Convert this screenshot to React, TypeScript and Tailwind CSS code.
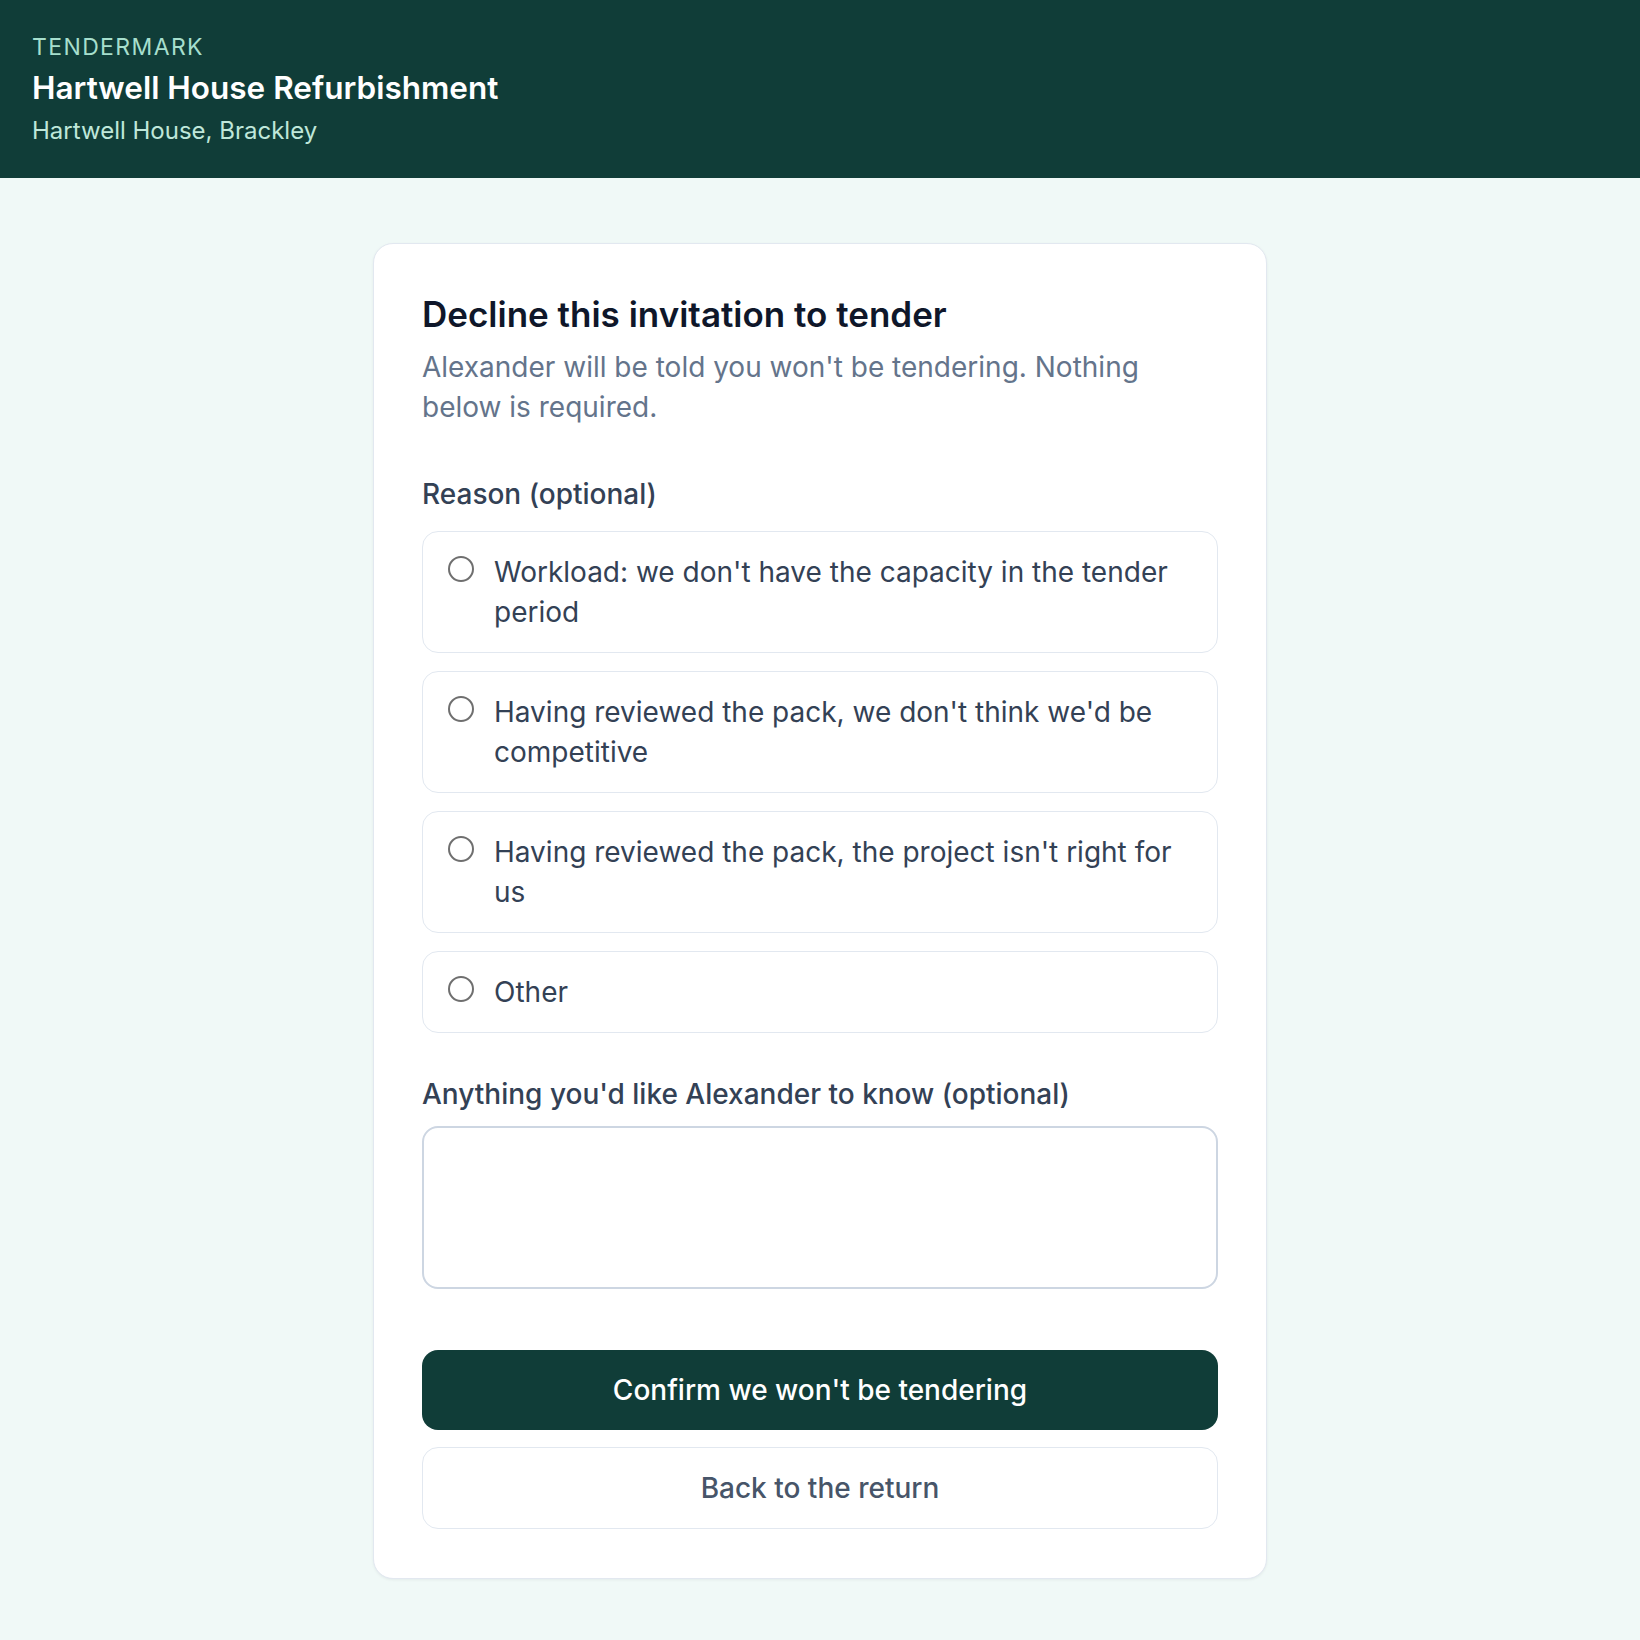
import React from "react";

const options = [
  "Workload: we don't have the capacity in the tender period",
  "Having reviewed the pack, we don't think we'd be competitive",
  "Having reviewed the pack, the project isn't right for us",
  "Other",
];

export default function App() {
  return (
    <div
      className="min-h-screen bg-[#f0f9f7]"
      style={{ fontFamily: "Inter, 'Noto Sans', sans-serif" }}
    >
      <header className="h-[178px] bg-[#103d38] px-[32px] pt-[31px]">
        <div className="text-[23px] leading-[33px] tracking-[0.06em] text-[#a6dfcd]">
          TENDERMARK
        </div>
        <div className="mt-[4px] text-[31.5px] leading-[40px] font-semibold text-white">
          Hartwell House Refurbishment
        </div>
        <div className="mt-[6px] text-[24px] leading-[33px] text-[#bfe7da]">
          Hartwell House, Brackley
        </div>
      </header>
      <main className="flex justify-center pt-[65px] pb-[60px]">
        <div className="w-[894px] rounded-[20px] border border-[#e2e8f0] bg-white px-[48px] pt-[48px] pb-[49px] shadow-[0_1px_3px_rgba(15,23,42,0.06)]">
          <h1 className="text-[35px] leading-[44px] font-semibold text-[#0f172a]">
            Decline this invitation to tender
          </h1>
          <p className="mt-[11px] text-[28px] leading-[40px] text-[#64748b]">
            Alexander will be told you won't be tendering. Nothing below is required.
          </p>
          <div className="mt-[47px] text-[28px] leading-[40px] font-medium text-[#334155]">
            Reason (optional)
          </div>
          <div className="mt-[17px] flex flex-col gap-[18px]">
            {options.map((o) => (
              <label
                key={o}
                className="flex items-start gap-[20px] rounded-[16px] border border-[#e2e8f0] bg-white pl-[25px] pr-[23px] py-[20px]"
              >
                <span className="mt-[4px] h-[26px] w-[26px] shrink-0 rounded-full border-[2px] border-[#6f6f6f] bg-white" />
                <span className="text-[28px] leading-[40px] text-[#334155]">{o}</span>
              </label>
            ))}
          </div>
          <div className="mt-[41px] text-[28px] leading-[40px] font-medium text-[#334155]">
            Anything you'd like Alexander to know (optional)
          </div>
          <textarea className="mt-[12px] block h-[163px] w-full resize-none rounded-[16px] border-[2px] border-[#cdd6e2] bg-white outline-none" />
          <button className="mt-[61px] flex h-[80px] w-full items-center justify-center rounded-[16px] bg-[#103d38] text-[28px] font-medium text-white">
            Confirm we won't be tendering
          </button>
          <button className="mt-[17px] flex h-[82px] w-full items-center justify-center rounded-[16px] border border-[#e2e8f0] bg-white text-[28px] font-medium text-[#475569]">
            Back to the return
          </button>
        </div>
      </main>
    </div>
  );
}
